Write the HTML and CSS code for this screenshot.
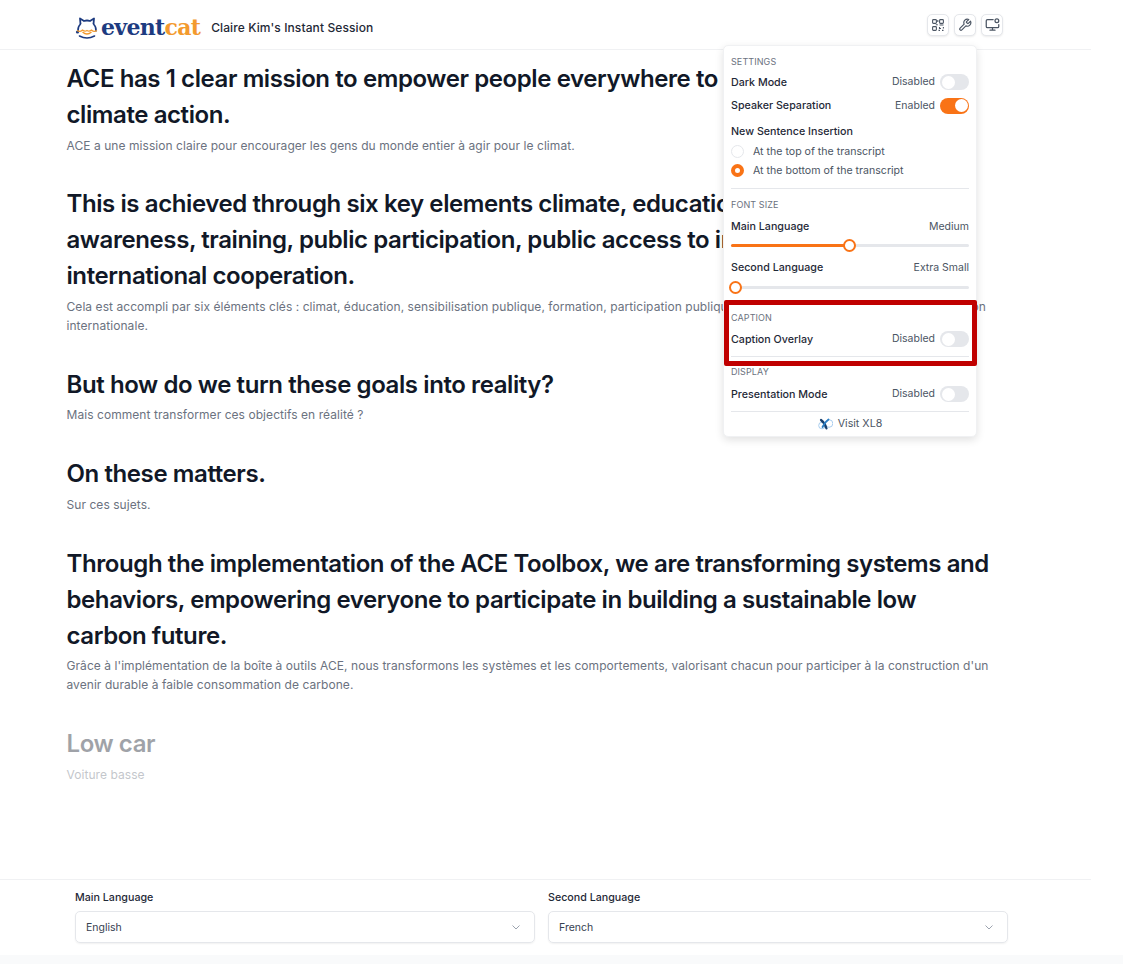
FILE: index.html
```html
<!DOCTYPE html>
<html lang="en">
<head>
<meta charset="utf-8">
<title>Claire Kim's Instant Session</title>
<link rel="stylesheet" href="styles.css">
</head>
<body>
<div class="page">
  <header class="topbar">
    <div class="brand">
      <svg class="cat" width="24" height="24" viewBox="0 0 24 24" fill="none">
        <path d="M5.500 8 L5 2.500 L9 5 Q12 4 15 5 L19 2.500 L18.500 8" stroke="#1d3b80" stroke-width="1.800" stroke-linejoin="round"/>
        <path d="M5.500 8 Q2.500 11 3 15 M18.500 8 Q21.500 11 21 15" stroke="#1d3b80" stroke-width="1.500" stroke-linecap="round"/>
        <path d="M4.500 20 Q12 24 19.500 20" stroke="#1d3b80" stroke-width="1.600" stroke-linecap="round"/>
        <circle cx="2.500" cy="16" r="1.600" fill="#1d3b80"/>
        <path d="M2 14.500 Q5 16.500 7.500 14 Q10 16 12 14.500 Q14 16 16.500 14 Q19 16.500 22 14.500" stroke="#f39a2e" stroke-width="1.200"/>
        <path d="M7.500 16 Q12 20 16.500 16" stroke="#f39a2e" stroke-width="1.200"/>
      </svg>
      <span class="wordmark"><span class="wm-event">event</span><span class="wm-cat">cat</span></span>
      <span class="session">Claire Kim's Instant Session</span>
    </div>
    <div class="tools">
      <button class="tool" aria-label="QR code">
        <svg width="12" height="12" viewBox="0 0 12 12" fill="none" stroke="#4b5563" stroke-width="1.100">
          <rect x=".6" y=".6" width="3.800" height="3.800" rx=".8"/><rect x="7.600" y=".6" width="3.800" height="3.800" rx=".8"/><rect x=".6" y="7.600" width="3.800" height="3.800" rx=".8"/>
          <path d="M5.800 1v2M5.800 5.800h-2M7.500 6h4M7.500 8v1.500h1.500M11.400 8v1.500M6.500 11.400h1.500M10 11.400h1.500"/>
        </svg>
      </button>
      <button class="tool" aria-label="Settings">
        <svg width="14" height="14" viewBox="0 0 24 24" fill="none" stroke="#4b5563" stroke-width="2" stroke-linecap="round" stroke-linejoin="round">
          <path d="M14.700 6.300a1 1 0 0 0 0 1.400l1.600 1.600a1 1 0 0 0 1.400 0l3.770-3.770a6 6 0 0 1-7.940 7.940l-6.910 6.910a2.120 2.120 0 0 1-3-3l6.910-6.910a6 6 0 0 1 7.940-7.940l-3.760 3.760z"/>
        </svg>
      </button>
      <button class="tool" aria-label="Display">
        <svg width="15" height="15" viewBox="0 0 24 24" fill="none" stroke="#4b5563" stroke-width="2" stroke-linecap="round" stroke-linejoin="round">
          <path d="M13 4H4a2 2 0 0 0-2 2v9a2 2 0 0 0 2 2h16a2 2 0 0 0 2-2v-3"/><path d="M12 17v4M8 21h8"/><circle cx="19" cy="6" r="3"/>
        </svg>
      </button>
    </div>
  </header>

  <main class="transcript">
    <article class="entry">
      <h2 class="line">ACE has 1 clear mission to empower people everywhere to take<br>climate action.</h2>
      <p class="trans">ACE a une mission claire pour encourager les gens du monde entier à agir pour le climat.</p>
    </article>
    <article class="entry">
      <h2 class="line">This is achieved through six key elements climate, education, public<br>awareness, training, public participation, public access to information, and<br>international cooperation.</h2>
      <p class="trans">Cela est accompli par six éléments clés : climat, éducation, sensibilisation publique, formation, participation publique, accès public à l'information et coopération internationale.</p>
    </article>
    <article class="entry">
      <h2 class="line">But how do we turn these goals into reality?</h2>
      <p class="trans">Mais comment transformer ces objectifs en réalité ?</p>
    </article>
    <article class="entry">
      <h2 class="line">On these matters.</h2>
      <p class="trans">Sur ces sujets.</p>
    </article>
    <article class="entry">
      <h2 class="line">Through the implementation of the ACE Toolbox, we are transforming systems and behaviors, empowering everyone to participate in building a sustainable low carbon future.</h2>
      <p class="trans">Grâce à l'implémentation de la boîte à outils ACE, nous transformons les systèmes et les comportements, valorisant chacun pour participer à la construction d'un avenir durable à faible consommation de carbone.</p>
    </article>
    <article class="entry pending">
      <h2 class="line">Low car</h2>
      <p class="trans">Voiture basse</p>
    </article>
  </main>

  <footer class="langbar">
    <div class="lang">
      <span class="lang-label">Main Language</span>
      <div class="select"><span>English</span><svg width="8" height="5" viewBox="0 0 8 5" fill="none" stroke="#9ca3af" stroke-width="1"><path d="M.5.5 4 4 7.500.5"/></svg></div>
    </div>
    <div class="lang">
      <span class="lang-label">Second Language</span>
      <div class="select"><span>French</span><svg width="8" height="5" viewBox="0 0 8 5" fill="none" stroke="#9ca3af" stroke-width="1"><path d="M.5.5 4 4 7.500.5"/></svg></div>
    </div>
  </footer>
</div>
<div class="strip"></div>

<aside class="panel">
  <h3 class="sec">Settings</h3>
  <div class="row r-dark"><span class="label">Dark Mode</span><span class="state">Disabled<i class="toggle"></i></span></div>
  <div class="row r-speaker"><span class="label">Speaker Separation</span><span class="state">Enabled<i class="toggle on"></i></span></div>
  <div class="label r-new">New Sentence Insertion</div>
  <div class="radio r-top"><i class="dot"></i>At the top of the transcript</div>
  <div class="radio r-bottom"><i class="dot sel"></i>At the bottom of the transcript</div>
  <hr class="rule r-1">
  <h3 class="sec">Font Size</h3>
  <div class="row r-main"><span class="label">Main Language</span><span class="state">Medium</span></div>
  <div class="slider s-main"><span class="fill"></span><span class="thumb"></span></div>
  <div class="row r-second"><span class="label">Second Language</span><span class="state">Extra Small</span></div>
  <div class="slider s-second"><span class="thumb"></span></div>
  <h3 class="sec sec-cap">Caption</h3>
  <div class="row r-cap"><span class="label">Caption Overlay</span><span class="state">Disabled<i class="toggle"></i></span></div>
  <hr class="rule r-2">
  <h3 class="sec sec-disp">Display</h3>
  <div class="row r-pres"><span class="label">Presentation Mode</span><span class="state">Disabled<i class="toggle"></i></span></div>
  <hr class="rule r-3">
  <div class="visit">
    <svg width="15" height="12" viewBox="0 0 15 12" fill="none">
      <circle cx="4" cy="7.500" r="3.300" stroke="#a9cdee" stroke-width="1"/><circle cx="11" cy="5.500" r="3.800" stroke="#a9cdee" stroke-width="1"/>
      <path d="M3 2 Q7 5 8.500 10.500" stroke="#17406f" stroke-width="2.200" stroke-linecap="round"/><path d="M10.500 1.500 Q7 4 4.500 9" stroke="#2d7fc4" stroke-width="1.800" stroke-linecap="round"/>
    </svg>
    Visit XL8
  </div>
</aside>
<div class="callout"></div>
</body>
</html>
```

FILE: styles.css
```css
* { box-sizing: border-box; }
html, body { margin: 0; padding: 0; }
body {
  position: relative;
  height: 964px;
  overflow: hidden;
  background: #fff;
  font-family: Inter, "Liberation Sans", sans-serif;
  color: #111827;
}
.page {
  width: 1091px;
  height: 955px;
  display: flex;
  flex-direction: column;
}
.strip { height: 9px; background: #f9fafb; }

.topbar {
  height: 50px;
  flex: none;
  border-bottom: 1px solid #f0f1f3;
  display: flex;
  align-items: center;
  justify-content: space-between;
  padding: 6px 88px 0 75px;
}
.brand { display: flex; align-items: center; }
.cat { flex: none; margin-right: 2px; }
.wordmark {
  font-family: "DejaVu Serif", serif;
  font-weight: 700;
  font-size: 22px;
  letter-spacing: -.7px;
  line-height: 1;
  margin-top: -2px;
}
.wm-event { color: #1d3b80; }
.wm-cat { color: #f39a2e; }
.session {
  margin-left: 11px;
  font-size: 12px;
  font-weight: 500;
  letter-spacing: .1px;
  color: #1f2937;
}
.tools { display: flex; gap: 5px; margin-top: -6px; }
.tool {
  width: 22px;
  height: 22px;
  padding: 0;
  display: flex;
  align-items: center;
  justify-content: center;
  background: #fff;
  border: 1px solid #e5e7eb;
  border-radius: 5px;
  box-shadow: 0 1px 2px rgba(0,0,0,.08);
}

.transcript {
  flex: 1;
  padding: 11.100px 0 0 66.500px;
  width: 1000px;
}
.entry { margin-bottom: 31.900px; }
.line {
  margin: 0;
  font-size: 24px;
  font-weight: 600;
  line-height: 36px;
  letter-spacing: -.41px;
  color: #111827;
}
.trans {
  margin: 2.500px 0 0;
  font-size: 12px;
  line-height: 19px;
  letter-spacing: .06px;
  color: #6b7280;
}
.pending { opacity: .4; }

.langbar {
  height: 76px;
  flex: none;
  border-top: 1px solid #f0f1f3;
  display: grid;
  grid-template-columns: 460px 460px;
  column-gap: 13px;
  padding: 10px 0 0 75px;
}
.lang { display: flex; flex-direction: column; gap: 6px; }
.lang-label { font-size: 10.700px; font-weight: 500; line-height: 15px; color: #1f2937; }
.select {
  height: 32px;
  display: flex;
  align-items: center;
  justify-content: space-between;
  padding: 0 14px 0 10px;
  font-size: 10.500px;
  color: #374151;
  border: 1px solid #e5e7eb;
  border-radius: 5px;
  box-shadow: 0 1px 2px rgba(0,0,0,.06);
}

.panel {
  position: absolute;
  left: 723px;
  top: 45px;
  width: 254px;
  height: 392px;
  padding: 10px 7px 0;
  background: #fff;
  border: 1px solid #f0f1f3;
  border-radius: 5px;
  box-shadow: 0 3px 8px rgba(0,0,0,.12);
}
.sec {
  margin: 0;
  font-size: 9px;
  line-height: 12px;
  font-weight: 400;
  text-transform: uppercase;
  letter-spacing: .1px;
  color: #6b7280;
}
.row { display: flex; justify-content: space-between; align-items: center; height: 16px; }
.label { font-size: 10.700px; font-weight: 500; line-height: 16px; color: #1f2937; }
.row .label { margin-top: 1px; }
.state {
  display: flex;
  align-items: center;
  gap: 5px;
  font-size: 10.500px;
  line-height: 16px;
  color: #4b5563;
}
.toggle {
  position: relative;
  width: 29px;
  height: 16px;
  border-radius: 8px;
  background: #e5e7eb;
}
.toggle::after {
  content: "";
  position: absolute;
  left: 1.500px;
  top: 1.500px;
  width: 13px;
  height: 13px;
  border-radius: 50%;
  background: #fff;
}
.toggle.on { background: #f97316; }
.toggle.on::after { left: 14.500px; }
.r-dark { margin-top: 6px; }
.r-speaker { margin-top: 7.500px; }
.r-new { margin-top: 10.500px; }
.radio {
  display: flex;
  align-items: center;
  gap: 9px;
  font-size: 10.600px;
  line-height: 16px;
  color: #4b5563;
}
.r-top { margin-top: 3.500px; }
.r-bottom { margin-top: 3px; }
.dot {
  width: 13px;
  height: 13px;
  border: 1px solid #e5e7eb;
  border-radius: 50%;
  background: #fff;
}
.dot.sel { border: 4px solid #f97316; }
.rule { margin: 0; border: 0; border-top: 1px solid #e5e7eb; }
.r-1 { margin: 9.500px 0 9.700px; }
.r-main { margin-top: 8px; }
.slider {
  position: relative;
  height: 3px;
  border-radius: 2px;
  background: #e5e7eb;
}
.fill {
  display: block;
  height: 3px;
  width: 119px;
  border-radius: 2px;
  background: #f97316;
}
.thumb {
  position: absolute;
  top: -5px;
  left: 112px;
  width: 13px;
  height: 13px;
  border: 2px solid #f97316;
  border-radius: 50%;
  background: #fff;
}
.s-main { margin-top: 9.500px; }
.s-second { margin-top: 10px; }
.s-second .thumb { left: -1.800px; }
.r-second { margin-top: 12.800px; }
.sec-cap { margin-top: 23.500px; }
.r-cap { margin-top: 7px; }
.r-2 { margin: 9px 0 9px; }
.sec-disp { margin: 0; }
.r-pres { margin-top: 7.700px; }
.r-3 { margin-top: 9px; }
.visit {
  display: flex;
  align-items: center;
  justify-content: center;
  gap: 5px;
  margin-top: 3.800px;
  font-size: 10.700px;
  line-height: 16px;
  color: #4b5563;
}
.callout {
  position: absolute;
  left: 724px;
  top: 300px;
  width: 253px;
  height: 66px;
  border: 5px solid #c00000;
  border-radius: 2px;
}
```
